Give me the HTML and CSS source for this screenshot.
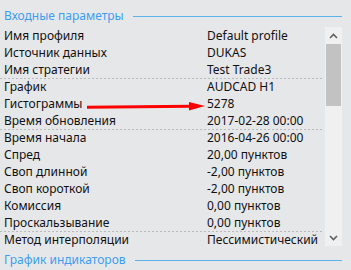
FILE: index.html
```html
<!DOCTYPE html>
<html lang="ru">
<head>
<meta charset="utf-8">
<link rel="stylesheet" href="styles.css">
</head>
<body>
<div class="panel">
  <div class="group-header"><span class="group-title">Входные параметры</span><span class="rule"></span></div>
  <div class="grid-wrap">
    <div class="rows">
      <div class="row"><span class="label">Имя профиля</span><span class="value">Default profile</span></div>
      <div class="row"><span class="label">Источник данных</span><span class="value">DUKAS</span></div>
      <div class="row"><span class="label">Имя стратегии</span><span class="value">Test Trade3</span></div>
      <div class="row sep"><span class="label">График</span><span class="value">AUDCAD H1</span></div>
      <div class="row"><span class="label">Гистограммы</span><span class="value">5278</span>
        <svg class="arrow" width="120" height="10" viewBox="0 0 120 10"><path d="M0 6.2 L104 5.2" stroke="#f00" stroke-width="3" fill="none"/><path d="M102 1 L118 5 L102 9.5 Z" fill="#f00"/></svg>
      </div>
      <div class="row"><span class="label">Время обновления</span><span class="value">2017-02-28 00:00</span></div>
      <div class="row sep"><span class="label">Время начала</span><span class="value">2016-04-26 00:00</span></div>
      <div class="row"><span class="label">Спред</span><span class="value">20,00 пунктов</span></div>
      <div class="row"><span class="label">Своп длинной</span><span class="value">-2,00 пунктов</span></div>
      <div class="row"><span class="label">Своп короткой</span><span class="value">-2,00 пунктов</span></div>
      <div class="row"><span class="label">Комиссия</span><span class="value">0,00 пунктов</span></div>
      <div class="row"><span class="label">Проскальзывание</span><span class="value">0,00 пунктов</span></div>
      <div class="row sep"><span class="label">Метод интерполяции</span><span class="value">Пессимистический</span></div>
    </div>
    <div class="scrollbar">
      <div class="sb-btn"><svg width="9" height="6" viewBox="0 0 9 6"><path d="M1 5 L4.5 1.5 L8 5" stroke="#606060" stroke-width="1.6" fill="none"/></svg></div>
      <div class="sb-thumb"></div>
      <div class="sb-track"></div>
      <div class="sb-btn"><svg width="9" height="6" viewBox="0 0 9 6"><path d="M1 1 L4.5 4.5 L8 1" stroke="#606060" stroke-width="1.6" fill="none"/></svg></div>
    </div>
  </div>
  <div class="group-header bottom"><span class="group-title">График индикаторов</span><span class="rule"></span></div>
</div>
</body>
</html>
```

FILE: styles.css
```css
html, body {
  margin: 0;
  padding: 0;
  background: #e6e7e9;
}
body {
  font-family: "Noto Sans", "Open Sans", sans-serif;
  font-size: 12px;
  color: #111;
  width: 351px;
  height: 270px;
  overflow: hidden;
}
.panel {
  padding: 8px 9px 0 0;
}
.group-header {
  display: flex;
  align-items: center;
  height: 16px;
  line-height: 16px;
  padding-left: 4px;
}
.group-title {
  color: #3d9ef0;
  white-space: nowrap;
}
.rule {
  flex: 1;
  height: 1px;
  background: #5cb2ec;
  margin-left: 9px;
  margin-top: 1px;
}
.group-header.bottom {
  margin-top: 6px;
}
.grid-wrap {
  display: flex;
  margin-top: 3px;
  height: 219px;
}
.rows {
  flex: 1;
  padding-right: 2px;
  height: 219px;
}
.row {
  position: relative;
  display: flex;
  height: 17px;
  line-height: 17px;
  box-sizing: border-box;
  white-space: nowrap;
}
.row.sep {
  background: repeating-linear-gradient(to right, #b9babc 0 2px, transparent 2px 4px) top left / 100% 1px no-repeat;
}
.label {
  width: 207px;
  padding-left: 4px;
  box-sizing: border-box;
}
.value {
  flex: 1;
}
.arrow {
  position: absolute;
  left: 87px;
  top: 6px;
}
.scrollbar {
  width: 17px;
  display: flex;
  flex-direction: column;
  background: #f0f0f0;
}
.sb-btn {
  height: 17px;
  display: flex;
  align-items: center;
  justify-content: center;
  flex: none;
}
.sb-thumb {
  height: 62px;
  margin: 0 1px;
  background: #c2c2c2;
  flex: none;
}
.sb-track {
  flex: 1;
}
```
